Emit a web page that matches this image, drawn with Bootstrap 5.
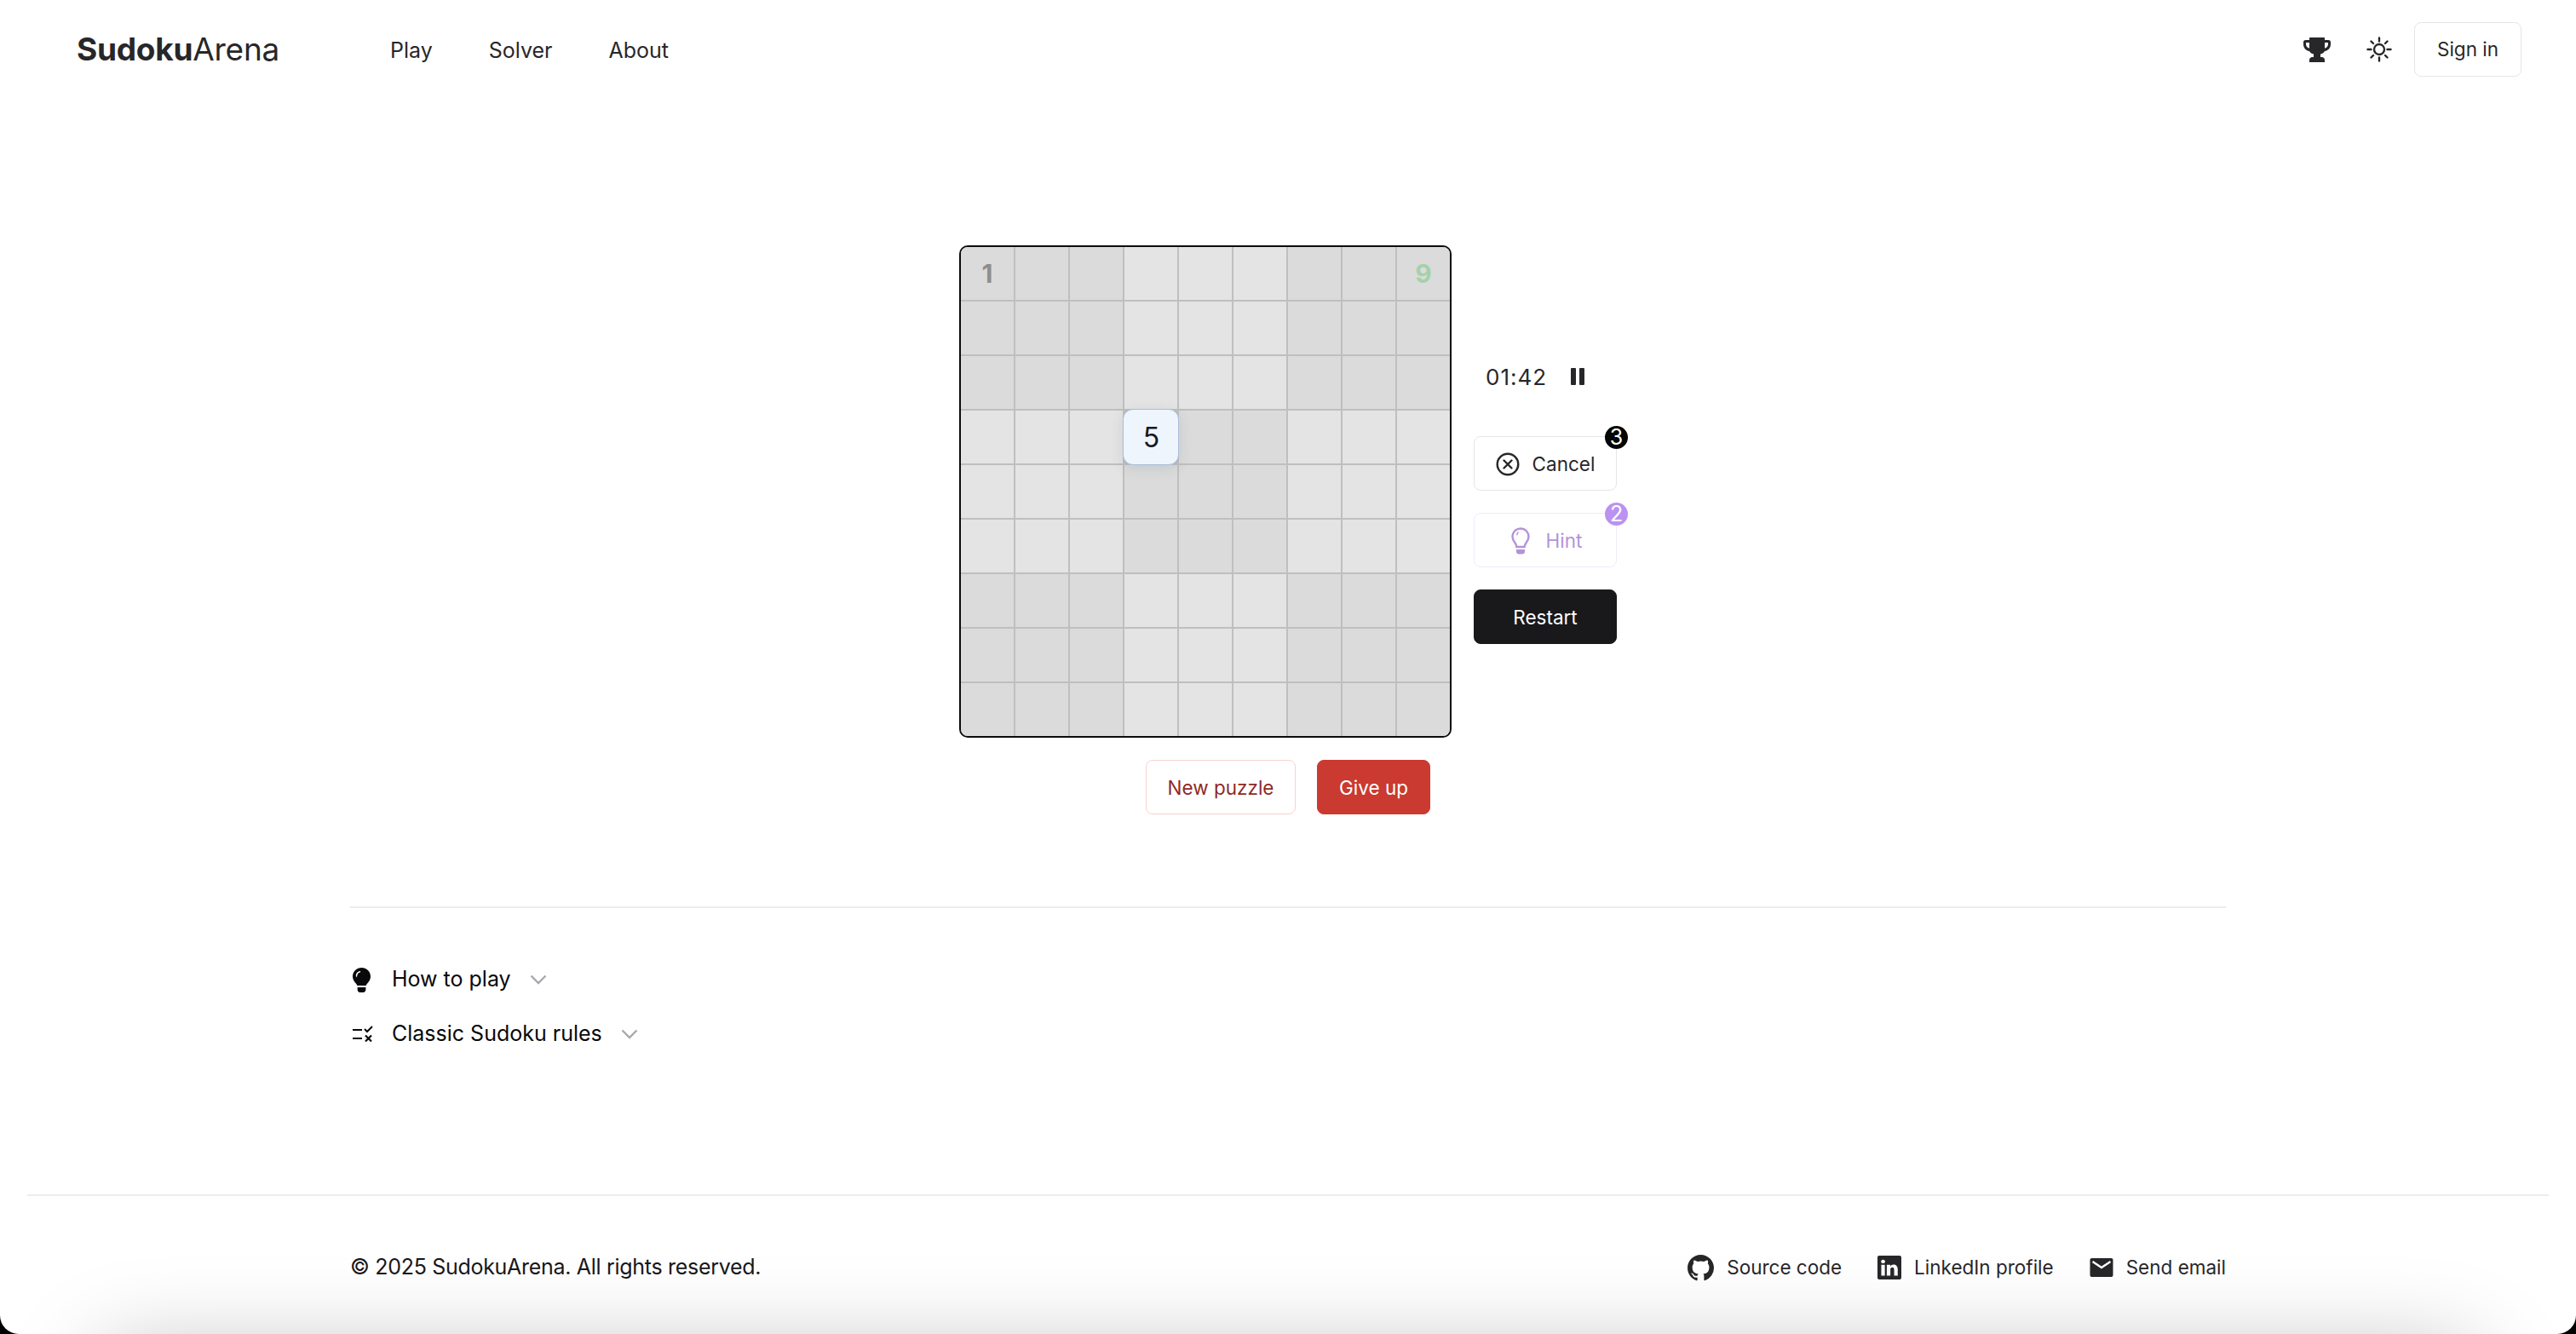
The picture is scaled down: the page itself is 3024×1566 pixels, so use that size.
<!DOCTYPE html>
<html lang="en">
<head>
    <meta charset="UTF-8">
    <meta name="viewport" content="width=device-width, initial-scale=1.0">
    <title>SudokuArena</title>
    <link href="https://cdn.jsdelivr.net/npm/bootstrap@5.3.2/dist/css/bootstrap.min.css" rel="stylesheet">
    <script src="https://cdn.jsdelivr.net/npm/bootstrap@5.3.2/dist/js/bootstrap.bundle.min.js"></script>
    <style>
        html, body {
            height: 100%;
        }
        body {
            font-family: "Inter", "Liberation Sans", sans-serif;
            background: #fff;
            color: #27272a;
            overflow: hidden;
        }
        /* Header */
        .top-bar {
            height: 116px;
            padding: 0 64px 0 90px;
        }
        .brand-name {
            font-size: 37px;
            letter-spacing: -0.25px;
            color: #27272a;
            width: 368px;
        }
        .brand-name b {
            font-weight: 700;
        }
        .top-link {
            font-size: 25px;
            color: #27272a;
            text-decoration: none;
        }
        .top-links {
            gap: 66px;
            padding-top: 4px;
        }
        .sun-icon {
            margin-left: 42px;
        }
        .app-btn {
            height: 64px;
            font-size: 22.5px;
            font-weight: 400;
            border-radius: 8px;
            padding: 2px 0 0;
            display: inline-flex;
            align-items: center;
            justify-content: center;
            gap: 15px;
            --bs-btn-border-color: #e6e6e8;
            --bs-btn-color: #27272a;
            position: relative;
        }
        .signin-btn {
            width: 126px;
            padding: 0;
            margin-left: 26px;
        }
        /* Board */
        .game-area {
            padding-top: 172px;
        }
        .board-row {
            gap: 26px;
        }
        .sudoku-board {
            display: grid;
            grid-template-columns: repeat(9, 62px);
            grid-auto-rows: 62px;
            gap: 2px;
            background: #bfbfbf;
            border: 2px solid #0c0c0c;
            border-radius: 10px;
        }
        .sudoku-cell {
            display: flex;
            align-items: center;
            justify-content: center;
            font-size: 30px;
            font-weight: 700;
            background: #e4e4e4;
        }
        .sudoku-cell.shaded {
            background: #dbdbdb;
        }
        .sudoku-cell:nth-child(1) {
            border-top-left-radius: 8px;
        }
        .sudoku-cell:nth-child(9) {
            border-top-right-radius: 8px;
        }
        .sudoku-cell:nth-child(73) {
            border-bottom-left-radius: 8px;
        }
        .sudoku-cell:nth-child(81) {
            border-bottom-right-radius: 8px;
        }
        .sudoku-cell.given {
            color: #8e8e8e;
        }
        .sudoku-cell.correct {
            color: #a3d2a8;
        }
        .sudoku-cell.active {
            margin: -2px;
            padding: 1px 0 0 1px;
            position: relative;
            z-index: 1;
            background: #eef5fd;
            border: 1px solid #a9bddc;
            border-radius: 12px;
            box-shadow: 0 4px 16px rgba(60, 70, 100, .12);
            font-weight: 400;
            font-size: 32px;
            color: #18181b;
        }
        .side-controls {
            width: 168px;
            gap: 26px;
        }
        .timer-row {
            height: 87px;
            padding-left: 14px;
            gap: 28px;
            font-size: 26px;
            letter-spacing: 1px;
        }
        .count-badge {
            position: absolute;
            top: -13px;
            right: -14px;
            width: 27px;
            height: 27px;
            border-radius: 50%;
            background: #050505;
            color: #fff;
            font-size: 25px;
            font-weight: 400;
            line-height: 27px;
            text-align: center;
        }
        .hint-btn {
            --bs-btn-border-color: #f1ebfa;
            --bs-btn-color: #b394d8;
            gap: 19px;
            padding-left: 3px;
        }
        .hint-btn .count-badge {
            background: #bb92f1;
        }
        .restart-btn {
            --bs-btn-bg: #19191b;
            --bs-btn-border-color: #19191b;
            --bs-btn-color: #fff;
        }
        .action-row {
            gap: 25px;
            margin-top: 26px;
        }
        .newpuzzle-btn {
            width: 176px;
            --bs-btn-border-color: #f6d2cf;
            --bs-btn-color: #8f2a25;
        }
        .giveup-btn {
            width: 133px;
            --bs-btn-bg: #ca3a31;
            --bs-btn-border-color: #ca3a31;
            --bs-btn-color: #fff;
        }
        /* Info section */
        .info-wrap {
            width: 2202px;
            margin: 108px auto 0;
            border-top: 2px solid #ececee;
            padding-top: 52px;
        }
        .info-row {
            height: 64px;
            font-size: 25px;
            color: #09090b;
        }
        .info-icon {
            width: 49px;
            padding-left: 3px;
        }
        .info-chevron {
            margin-left: 22px;
        }
        /* Footer */
        .page-footer {
            position: absolute;
            left: 32px;
            right: 32px;
            top: 1402px;
            border-top: 2px solid #ececee;
        }
        .footer-inner {
            width: 2202px;
            margin: 0 auto;
            height: 168px;
        }
        .footer-copy {
            font-size: 25px;
            letter-spacing: -0.3px;
            color: #18181b;
        }
        .footer-link {
            font-size: 22.5px;
            color: #27272a;
            text-decoration: none;
            gap: 15px;
        }
        .footer-links {
            gap: 42px;
        }
        /* Screen edge: soft shadow at the bottom and rounded black corners */
        .screen-edge {
            position: fixed;
            inset: 0;
            pointer-events: none;
            overflow: hidden;
            z-index: 5;
        }
        .screen-edge::before {
            content: "";
            position: absolute;
            left: 120px;
            right: 120px;
            top: 1590px;
            height: 200px;
            box-shadow: 0 0 110px 0 rgba(0, 0, 0, .28);
        }
        .screen-edge::after {
            content: "";
            position: absolute;
            inset: 0;
            border-radius: 0 0 22px 22px;
            box-shadow: 0 0 0 30px #000;
        }
    </style>
</head>
<body>
    <!-- Header -->
    <nav class="top-bar d-flex align-items-center justify-content-between">
        <div class="d-flex align-items-center">
            <a class="brand-name text-decoration-none"><b>Sudoku</b>Arena</a>
            <div class="top-links d-flex">
                <a class="top-link" href="#">Play</a>
                <a class="top-link" href="#">Solver</a>
                <a class="top-link" href="#">About</a>
            </div>
        </div>
        <div class="d-flex align-items-center">
            <svg width="32" height="29" viewBox="0 0 32 29" fill="#27272a" fill-rule="evenodd"><path d="M8 0h16c.6 0 1 .4 1 1v2h4.500C31 3 32 4 32 5.500V8c0 4.200-3 7.500-7 8-.9 1.700-2.500 2.900-5 3.400V23h1.500c2 0 3.500 1.500 3.500 3.500V29H7v-2.500C7 24.500 8.500 23 10.500 23H12v-3.600c-2.500-.5-4.100-1.700-5-3.400-4-.5-7-3.800-7-8V5.500C0 4 1 3 2.500 3H7V1c0-.6.4-1 1-1zM3 6v2c0 2.200 1.600 4.200 4 4.800V6zm26 0h-4v6.800c2.400-.6 4-2.600 4-4.800z"/></svg>
            <svg class="sun-icon" width="30" height="30" viewBox="0 0 30 30" fill="none" stroke="#27272a" stroke-width="2.400" stroke-linecap="round"><circle cx="15" cy="15" r="6"/><path d="M15 1.500v4M15 24.500v4M1.500 15h4M24.500 15h4M5.500 5.500l2.500 2.500M22 22l2.500 2.500M5.500 24.500L8 22M22 8l2.500-2.500"/></svg>
            <button class="btn app-btn signin-btn">Sign in</button>
        </div>
    </nav>

    <!-- Game -->
    <main class="game-area">
        <div class="board-row d-flex justify-content-center align-items-center">
            <div class="sudoku-board" id="board"></div>
            <div class="side-controls d-flex flex-column">
                <div class="timer-row d-flex align-items-center">
                    <span>01:42</span>
                    <svg width="16" height="20" viewBox="0 0 16 20" fill="#27272a"><rect width="6" height="20" rx="1"/><rect x="10" width="6" height="20" rx="1"/></svg>
                </div>
                <button class="btn app-btn">
                    <svg width="28" height="28" viewBox="0 0 28 28" fill="none" stroke="#27272a" stroke-width="2.400" stroke-linecap="round"><circle cx="14" cy="14" r="12.300"/><path d="M9.500 9.500l9 9M18.500 9.500l-9 9"/></svg>
                    Cancel
                    <span class="count-badge">&#51;</span>
                </button>
                <button class="btn app-btn hint-btn">
                    <svg width="22" height="32" viewBox="0 0 22 32" fill="none" stroke="#b394d8" stroke-width="2.400" stroke-linecap="round"><path d="M11 1.500C5.700 1.500 1.500 5.700 1.500 11c0 3.600 1.900 5.800 3.300 7.700.9 1.300 1.400 2.500 1.600 4.300h9.200c.2-1.800.7-3 1.600-4.300 1.400-1.900 3.300-4.100 3.300-7.700 0-5.300-4.200-9.500-9.500-9.500z"/><path d="M6 6.500c-.6.800-1 1.700-1.100 2.600" stroke-width="1.600" transform="translate(2 -.5)"/><path d="M6 26h10v2.500c0 1.700-1.300 3-3 3H9c-1.700 0-3-1.300-3-3z" fill="#b394d8" stroke="none"/></svg>
                    Hint
                    <span class="count-badge">&#50;</span>
                </button>
                <button class="btn app-btn restart-btn">Restart</button>
            </div>
        </div>
        <div class="action-row d-flex justify-content-center">
            <button class="btn app-btn newpuzzle-btn">New puzzle</button>
            <button class="btn app-btn giveup-btn">Give up</button>
        </div>

        <div class="info-wrap">
            <div class="info-row d-flex align-items-center">
                <span class="info-icon"><svg class="d-block" width="21" height="29" viewBox="0 0 21 29" fill="#09090b"><path d="M10.500 0C4.700 0 0 4.600 0 10.300c0 3.600 1.800 5.800 3.400 7.700.9 1.100 1.600 2 2 3h10.200c.4-1 1.100-1.900 2-3 1.600-1.900 3.400-4.100 3.400-7.700C21 4.600 16.300 0 10.500 0z"/><path d="M5.600 23h9.800v2.500c0 1.900-1.300 3.500-3 3.500H8.600c-1.700 0-3-1.600-3-3.500z"/><path d="M4.500 10c0-2.700 1.700-4.700 4-5.300" fill="none" stroke="#fff" stroke-width="1.500" stroke-linecap="round"/></svg></span>
                How to play
                <svg class="info-chevron" width="20" height="12" viewBox="0 0 20 12" fill="none" stroke="#a8a8ae" stroke-width="2.400"><path d="M1.500 1.500L10 10l8.500-8.500"/></svg>
            </div>
            <div class="info-row d-flex align-items-center">
                <span class="info-icon"><svg class="d-block" width="24" height="20" viewBox="0 0 24 20" fill="none" stroke="#09090b" stroke-width="2.200"><path d="M0 5h11M0 15h11"/><path d="M14 4l3 3 6-6" stroke-width="2"/><path d="M15 11.500l7 7M22 11.500l-7 7" stroke-width="2.200"/></svg></span>
                Classic Sudoku rules
                <svg class="info-chevron" width="20" height="12" viewBox="0 0 20 12" fill="none" stroke="#a8a8ae" stroke-width="2.400"><path d="M1.500 1.500L10 10l8.500-8.500"/></svg>
            </div>
        </div>
    </main>

    <!-- Footer -->
    <footer class="page-footer">
        <div class="footer-inner d-flex align-items-center justify-content-between">
            <span class="footer-copy">&copy; 2025 SudokuArena. All rights reserved.</span>
            <div class="footer-links d-flex align-items-center">
                <a class="footer-link d-flex align-items-center" href="#">
                    <svg width="31" height="31" viewBox="0 0 16 16" fill="#27272a"><path d="M8 0C3.580 0 0 3.580 0 8c0 3.540 2.290 6.530 5.470 7.590.4.070.55-.17.55-.38 0-.19-.01-.82-.01-1.490-2.010.37-2.530-.49-2.690-.94-.09-.23-.48-.94-.82-1.130-.28-.15-.68-.52-.01-.53.63-.01 1.080.58 1.230.82.720 1.210 1.870.87 2.330.66.070-.52.28-.87.51-1.070-1.780-.2-3.640-.89-3.640-3.950 0-.87.31-1.590.82-2.150-.08-.2-.36-1.020.08-2.120 0 0 .67-.21 2.200.82.64-.18 1.320-.27 2-.27.68 0 1.360.09 2 .27 1.530-1.040 2.200-.82 2.200-.82.44 1.100.16 1.920.08 2.120.51.56.82 1.270.82 2.150 0 3.070-1.870 3.750-3.650 3.950.29.25.54.73.54 1.480 0 1.070-.01 1.930-.01 2.200 0 .21.15.46.55.38A8.013 8.013 0 0 0 16 8c0-4.420-3.580-8-8-8z"/></svg>
                    Source code
                </a>
                <a class="footer-link d-flex align-items-center" href="#">
                    <svg width="28" height="28" viewBox="0 0 16 16" fill="#27272a"><path d="M0 1.146C0 .513.526 0 1.175 0h13.650C15.474 0 16 .513 16 1.146v13.708c0 .633-.526 1.146-1.175 1.146H1.175C.526 16 0 15.487 0 14.854V1.146zm4.943 12.248V6.169H2.542v7.225h2.401zm-1.200-8.212c.837 0 1.358-.554 1.358-1.248-.015-.709-.52-1.248-1.342-1.248-.822 0-1.359.54-1.359 1.248 0 .694.521 1.248 1.327 1.248h.016zm4.908 8.212V9.359c0-.216.016-.432.08-.586.173-.431.568-.878 1.232-.878.869 0 1.216.662 1.216 1.634v3.865h2.401V9.250c0-2.220-1.184-3.252-2.764-3.252-1.274 0-1.845.7-2.165 1.193v.025h-.016a5.540 5.540 0 0 1 .016-.025V6.169h-2.400c.03.678 0 7.225 0 7.225h2.400z"/></svg>
                    LinkedIn profile
                </a>
                <a class="footer-link d-flex align-items-center" href="#">
                    <svg width="28" height="24" viewBox="0 0 28 24" fill="#27272a"><path d="M2.500 1h23c1.100 0 2 .9 2 2v18c0 1.100-.9 2-2 2h-23c-1.100 0-2-.9-2-2V3c0-1.100.9-2 2-2z"/><path d="M3.500 5L14 12l10.500-7" fill="none" stroke="#fff" stroke-width="2.400"/></svg>
                    Send email
                </a>
            </div>
        </div>
    </footer>

    <div class="screen-edge"></div>

    <script>
        // Build the 81 cells, 3x3 boxes alternate shading
        const board = document.getElementById('board');
        for (let r = 0; r < 9; r++) {
            for (let c = 0; c < 9; c++) {
                const cell = document.createElement('div');
                cell.className = 'sudoku-cell';
                if ((Math.floor(r / 3) + Math.floor(c / 3)) % 2 === 0) cell.classList.add('shaded');
                if (r === 0 && c === 0) { cell.textContent = '1'; cell.classList.add('given'); }
                if (r === 0 && c === 8) { cell.textContent = '9'; cell.classList.add('correct'); }
                if (r === 3 && c === 3) { cell.textContent = '5'; cell.classList.add('active'); }
                board.appendChild(cell);
            }
        }
    </script>
</body>
</html>
